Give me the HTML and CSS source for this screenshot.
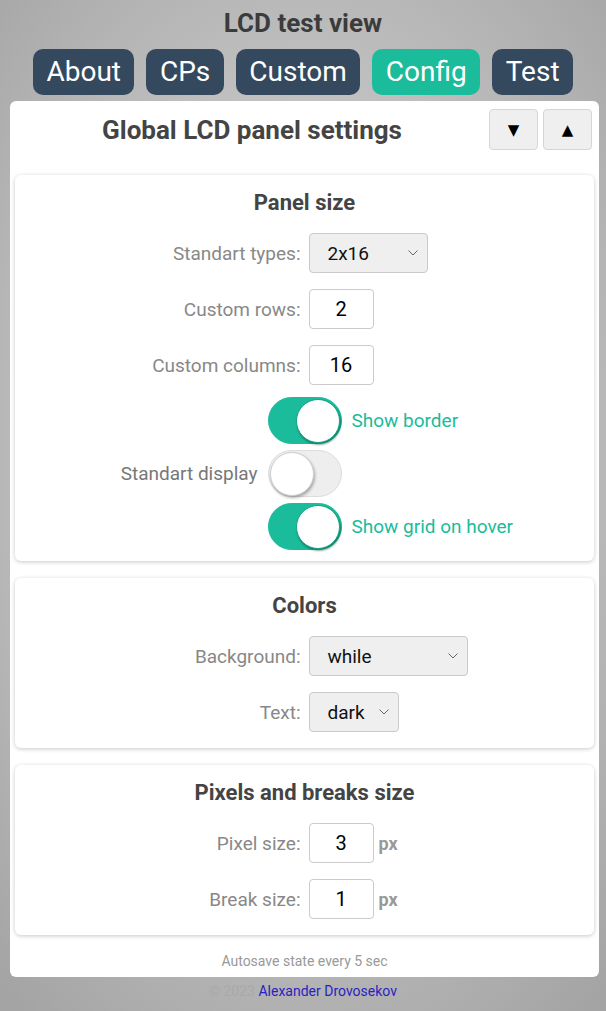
FILE: index.html
```html
<!DOCTYPE html>
<html lang="en">
<head>
<meta charset="utf-8">
<title>LCD test view</title>
<link rel="stylesheet" href="styles.css">
</head>
<body>
<h1 class="app-title">LCD test view</h1>
<nav class="tabs">
  <a class="tab">About</a>
  <a class="tab">CPs</a>
  <a class="tab">Custom</a>
  <a class="tab tab-active">Config</a>
  <a class="tab">Test</a>
</nav>
<main class="panel">
  <div class="panel-head">
    <h2 class="panel-title">Global LCD panel settings</h2>
    <div class="panel-tools">
      <button class="tool-btn">&#9660;</button>
      <button class="tool-btn">&#9650;</button>
    </div>
  </div>

  <section class="card">
    <h3 class="card-title">Panel size</h3>
    <div class="rows">
      <div class="row">
        <span class="row-label">Standart types:</span>
        <div class="row-field">
          <div class="select select-types"><span>2x16</span><svg class="chev" width="10" height="6" viewBox="0 0 10 6"><polyline points="0.5,0.5 5,5 9.5,0.5" fill="none" stroke="#666" stroke-width="1"/></svg></div>
        </div>
      </div>
      <div class="row">
        <span class="row-label">Custom rows:</span>
        <div class="row-field"><input class="num" value="2"></div>
      </div>
      <div class="row">
        <span class="row-label">Custom columns:</span>
        <div class="row-field"><input class="num" value="16"></div>
      </div>
    </div>
    <div class="toggles">
      <div class="toggle-row">
        <span class="t-left"></span>
        <span class="switch on"><span class="knob"></span></span>
        <span class="t-right">Show border</span>
      </div>
      <div class="toggle-row">
        <span class="t-left">Standart display</span>
        <span class="switch"><span class="knob"></span></span>
        <span class="t-right"></span>
      </div>
      <div class="toggle-row">
        <span class="t-left"></span>
        <span class="switch on"><span class="knob"></span></span>
        <span class="t-right">Show grid on hover</span>
      </div>
    </div>
  </section>

  <section class="card">
    <h3 class="card-title">Colors</h3>
    <div class="rows">
      <div class="row">
        <span class="row-label">Background:</span>
        <div class="row-field">
          <div class="select select-bg"><span>while</span><svg class="chev" width="10" height="6" viewBox="0 0 10 6"><polyline points="0.5,0.5 5,5 9.5,0.5" fill="none" stroke="#666" stroke-width="1"/></svg></div>
        </div>
      </div>
      <div class="row">
        <span class="row-label">Text:</span>
        <div class="row-field">
          <div class="select select-text"><span>dark</span><svg class="chev" width="10" height="6" viewBox="0 0 10 6"><polyline points="0.5,0.5 5,5 9.5,0.5" fill="none" stroke="#666" stroke-width="1"/></svg></div>
        </div>
      </div>
    </div>
  </section>

  <section class="card">
    <h3 class="card-title">Pixels and breaks size</h3>
    <div class="rows">
      <div class="row">
        <span class="row-label">Pixel size:</span>
        <div class="row-field"><input class="num" value="3"><span class="unit">px</span></div>
      </div>
      <div class="row">
        <span class="row-label">Break size:</span>
        <div class="row-field"><input class="num" value="1"><span class="unit">px</span></div>
      </div>
    </div>
  </section>

  <p class="autosave">Autosave state every 5 sec</p>
</main>
<footer class="footer">&copy; 2023 <a class="author">Alexander Drovosekov</a></footer>
</body>
</html>
```
FILE: styles.css
```css
* { box-sizing: border-box; }

html, body { height: 100%; }

body {
  margin: 0;
  font-family: Roboto, "Liberation Sans", Arial, sans-serif;
  background: radial-gradient(ellipse 75% 70% at 50% 45%, #d6d6d6 0%, #c4c4c4 45%, #a4a4a4 100%);
  background-color: #b0b0b0;
  color: #333;
  overflow: hidden;
}

.app-title {
  margin: 0;
  padding-top: 8px;
  font-size: 26px;
  line-height: 30px;
  font-weight: 700;
  text-align: center;
  color: #3b3b3b;
}

.tabs {
  display: flex;
  justify-content: center;
  gap: 12px;
  margin-top: 11px;
}

.tab {
  display: block;
  padding: 6px 13.5px;
  font-size: 28px;
  line-height: 34px;
  color: #fff;
  background: #34495e;
  border-radius: 10px;
}

.tab-active { background: #1abc9c; }

.panel {
  margin: 6px 7px 0 10px;
  background: #fff;
  border-radius: 6px;
  padding: 8px 5px 7px;
}

.panel-head {
  display: flex;
  align-items: center;
  height: 41px;
  margin-bottom: 25px;
}

.panel-title {
  flex: 1;
  margin: 0;
  text-align: center;
  font-size: 26px;
  line-height: 30px;
  font-weight: 700;
  color: #444;
}

.panel-tools {
  display: flex;
  gap: 5px;
  margin-right: 2px;
}

.tool-btn {
  width: 49px;
  height: 41px;
  padding: 0;
  border: 1px solid #d6d6d6;
  border-radius: 4px;
  background: #efefef;
  font-size: 15px;
  color: #000;
  font-family: "DejaVu Sans", sans-serif;
}

.card {
  background: #fff;
  border-radius: 6px;
  box-shadow: 0 1px 4px rgba(0, 0, 0, 0.22);
  padding: 15px 16px 16px;
  margin-bottom: 17px;
}

.card-title {
  margin: 0 0 17px;
  text-align: center;
  font-size: 22px;
  line-height: 26px;
  font-weight: 700;
  color: #444;
}

.rows {
  display: flex;
  flex-direction: column;
  gap: 16px;
}

.row {
  display: grid;
  grid-template-columns: 1fr 1fr;
  column-gap: 8px;
  align-items: center;
  height: 40px;
}

.row-label {
  text-align: right;
  font-size: 19px;
  color: #888;
}

.row-field {
  display: flex;
  align-items: center;
  gap: 5px;
}

.select {
  display: flex;
  align-items: center;
  justify-content: space-between;
  height: 40px;
  padding: 0 9px 0 18px;
  background: #efefef;
  border: 1px solid #cacaca;
  border-radius: 4px;
  font-size: 19px;
  color: #111;
}

.select-types { width: 119px; }
.select-bg { width: 159px; }
.select-text { width: 90px; }

.chev { flex: none; }

.num {
  width: 65px;
  height: 40px;
  border: 1px solid #cacaca;
  border-radius: 4px;
  background: #fff;
  text-align: center;
  font-family: Roboto, "Liberation Sans", Arial, sans-serif;
  font-size: 20px;
  color: #000;
  padding: 0;
}

.unit {
  font-size: 18px;
  font-weight: 700;
  color: #999;
}

.toggles {
  display: flex;
  flex-direction: column;
  gap: 13px;
  margin-top: 12px;
  margin-bottom: 2px;
}

.toggle-row {
  display: grid;
  grid-template-columns: 1fr 74px 1fr;
  column-gap: 10px;
  align-items: center;
  height: 40px;
}

.t-left {
  text-align: right;
  font-size: 19px;
  color: #777;
}

.t-right {
  font-size: 19px;
  color: #1abc9c;
}

.switch {
  display: flex;
  align-items: center;
  width: 74px;
  height: 47px;
  padding: 1px;
  border-radius: 24px;
  background: #eeeeee;
  border: 1px solid #dcdcdc;
}

.switch.on {
  justify-content: flex-end;
  background: #1abc9c;
  border-color: #1abc9c;
}

.knob {
  width: 44px;
  height: 44px;
  border-radius: 50%;
  background: #fff;
  border: 1px solid #cfcfcf;
  box-shadow: 1px 2px 3px rgba(0, 0, 0, 0.3);
}

.switch.on .knob {
  border-color: #16a386;
  box-shadow: 1px 2px 2px rgba(0, 60, 45, 0.45);
}

.autosave {
  margin: 16px 0 0;
  text-align: center;
  font-size: 14px;
  line-height: 18px;
  color: #999;
}

.footer {
  margin-top: 5px;
  text-align: center;
  font-size: 14px;
  line-height: 18px;
  color: #a9a9a9;
}

.author { color: #2a1fc0; }
```
